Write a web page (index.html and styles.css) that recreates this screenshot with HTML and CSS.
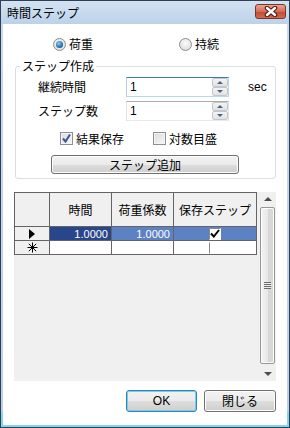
FILE: index.html
```html
<!DOCTYPE html>
<html>
<head>
    <meta charset="UTF-8">
    <title>時間ステップ</title>
    <link rel="stylesheet" href="styles.css">
</head>
<body>
    <div class="window">
        <div class="titlebar">
            <span class="title">時間ステップ</span>
            <span class="close-btn">
                <svg width="14" height="11" viewBox="0 0 14 11">
                    <path d="M3 2 L11 9 M11 2 L3 9" stroke="#4a1a12" stroke-width="4.5" stroke-linecap="round"/>
                    <path d="M3 2 L11 9 M11 2 L3 9" stroke="#fff" stroke-width="2.4" stroke-linecap="round"/>
                </svg>
            </span>
        </div>

        <div class="client">
            <div class="radio-row">
                <label class="radio"><span class="radio-dot checked"></span>荷重</label>
                <label class="radio"><span class="radio-dot"></span>持続</label>
            </div>

            <fieldset class="group">
                <legend>ステップ作成</legend>
                <div class="group-body">
                    <div class="field-row">
                        <span class="field-label">継続時間</span>
                        <div class="spin focused">
                            <span class="spin-value">1</span>
                            <div class="spin-btns">
                                <span class="spin-btn"><span class="arrow-up"></span></span>
                                <span class="spin-btn"><span class="arrow-down"></span></span>
                            </div>
                        </div>
                        <span class="unit">sec</span>
                    </div>
                    <div class="field-row">
                        <span class="field-label">ステップ数</span>
                        <div class="spin">
                            <span class="spin-value">1</span>
                            <div class="spin-btns">
                                <span class="spin-btn"><span class="arrow-up"></span></span>
                                <span class="spin-btn"><span class="arrow-down"></span></span>
                            </div>
                        </div>
                    </div>
                    <div class="check-row">
                        <label class="check">
                            <span class="check-box">
                                <svg width="11" height="11" viewBox="0 0 11 11">
                                    <path d="M2 5.5 L4.5 8.5 L9 1.5" fill="none" stroke="#3c5596" stroke-width="2"/>
                                </svg>
                            </span>結果保存
                        </label>
                        <label class="check"><span class="check-box"></span>対数目盛</label>
                    </div>
                    <button class="btn btn-add">ステップ追加</button>
                </div>
            </fieldset>

            <div class="grid">
                <table class="data-table">
                    <tr class="head">
                        <th class="row-head"></th>
                        <th class="col-time">時間</th>
                        <th class="col-load">荷重係数</th>
                        <th class="col-save">保存ステップ</th>
                    </tr>
                    <tr class="selected">
                        <th class="row-head">
                            <svg width="6" height="10" viewBox="0 0 6 10"><path d="M0 0 L6 5 L0 10 Z" fill="#000"/></svg>
                        </th>
                        <td class="num current">1.0000</td>
                        <td class="num">1.0000</td>
                        <td class="cb-cell">
                            <span class="cell-check">
                                <svg width="10" height="9" viewBox="0 0 10 9">
                                    <path d="M1 4.5 L3.8 7.5 L9 1" fill="none" stroke="#000" stroke-width="2"/>
                                </svg>
                            </span>
                        </td>
                    </tr>
                    <tr class="new-row">
                        <th class="row-head">
                            <svg width="11" height="11" viewBox="0 0 11 11">
                                <path d="M5.5 0.5 V10.5 M0.5 5.5 H10.5 M1.8 1.8 L9.2 9.2 M9.2 1.8 L1.8 9.2" stroke="#000" stroke-width="1"/>
                            </svg>
                        </th>
                        <td></td>
                        <td></td>
                        <td class="cb-cell"><span class="cell-check empty"></span></td>
                    </tr>
                </table>

                <div class="scrollbar">
                    <span class="sb-arrow"><span class="sb-up"></span></span>
                    <div class="sb-thumb">
                        <span class="grip"></span>
                    </div>
                    <span class="sb-arrow"><span class="sb-down"></span></span>
                </div>
            </div>

            <div class="footer">
                <button class="btn btn-ok">OK</button>
                <button class="btn btn-close">閉じる</button>
            </div>
        </div>
    </div>
</body>
</html>
```

FILE: styles.css
```css
body {
    margin: 0;
    font-family: "Noto Sans CJK JP", "Noto Sans", sans-serif;
    font-size: 12px;
    color: #000;
}
.window {
    width: 290px;
    height: 428px;
    box-sizing: border-box;
    border: 1px solid #2f3f55;
    background: linear-gradient(#c9dbef, #b9d1ea 96%, #7fd6ee 97%);
    display: flex;
    flex-direction: column;
}
.titlebar {
    height: 23px;
    flex-shrink: 0;
    display: flex;
    align-items: center;
    justify-content: space-between;
    padding: 0 3px 0 6px;
    background: linear-gradient(#d3e2f2, #bcd2ea);
}
.title {
    line-height: 14px;
    margin-top: 1px;
}
.close-btn {
    width: 31px;
    height: 15px;
    margin-top: -3px;
    box-sizing: border-box;
    border: 1px solid #7d3326;
    border-radius: 3px;
    background: linear-gradient(#e9a696, #d66b55 50%, #c24a31 51%, #cf6a4f);
    display: flex;
    align-items: center;
    justify-content: center;
}
.client {
    flex: 1;
    margin: 0 2px 2px;
    background: #fff;
    display: flex;
    flex-direction: column;
}

/* radio buttons */
.radio-row {
    display: grid;
    grid-template-columns: 126px 1fr;
    height: 14px;
    margin-top: 13px;
    padding-left: 50px;
}
.radio {
    display: flex;
    align-items: center;
    gap: 3px;
    line-height: 14px;
}
.radio-dot {
    width: 13px;
    height: 13px;
    box-sizing: border-box;
    border: 1px solid #8e8f8f;
    border-radius: 50%;
    background: radial-gradient(circle at 50% 40%, #fbfbfb, #d6d6d6);
    display: flex;
    align-items: center;
    justify-content: center;
}
.radio-dot.checked::after {
    content: "";
    width: 7px;
    height: 7px;
    border-radius: 50%;
    background: radial-gradient(circle at 40% 35%, #8fd0f5, #1f6fb0 60%, #0e4d86);
}

/* group box */
.group {
    margin: 8px 11px 0 12px;
    padding: 0;
    border: 1px solid #d5dfe5;
    border-radius: 3px;
}
.group legend {
    margin-left: 4px;
    padding: 0 2px;
    line-height: 14px;
}
.group-body {
    padding: 4px 0 4px 22px;
}
.field-row {
    display: flex;
    align-items: center;
    height: 20px;
    margin-bottom: 4px;
}
.field-label {
    width: 88px;
    line-height: 14px;
}
.spin {
    width: 103px;
    height: 20px;
    box-sizing: border-box;
    border: 1px solid;
    border-color: #abadb3 #e2e3ea #e3e9ef #e2e3ea;
    display: flex;
    align-items: center;
    justify-content: space-between;
}
.spin.focused {
    border-color: #3d7bad #b7d9ed #b7d9ed #b5cfe7;
}
.spin-value {
    padding-left: 3px;
    font-family: "Liberation Sans", sans-serif;
    font-size: 12px;
}
.spin-btns {
    width: 16px;
    height: 18px;
    display: flex;
    flex-direction: column;
}
.spin-btn {
    flex: 1;
    box-sizing: border-box;
    border: 1px solid #c3c7cd;
    border-radius: 2px;
    background: linear-gradient(#f4f4f4, #e2e2e2);
    display: flex;
    align-items: center;
    justify-content: center;
}
.arrow-up, .arrow-down {
    width: 0;
    height: 0;
    border-left: 3px solid transparent;
    border-right: 3px solid transparent;
}
.arrow-up {
    border-bottom: 3px solid #4d6185;
}
.arrow-down {
    border-top: 3px solid #4d6185;
}
.unit {
    margin-left: 19px;
    font-family: "Liberation Sans", sans-serif;
}
.check-row {
    display: grid;
    grid-template-columns: 93px 1fr;
    height: 13px;
    margin-top: 11px;
    padding-left: 22px;
}
.check {
    display: flex;
    align-items: center;
    gap: 3px;
    line-height: 13px;
    height: 13px;
}
.check-box {
    width: 13px;
    height: 13px;
    box-sizing: border-box;
    border: 1px solid #8e8f8f;
    background: linear-gradient(135deg, #dcdcdc, #f6f6f6);
    box-shadow: inset 0 0 0 1px #f4f4f4;
    display: flex;
    align-items: center;
    justify-content: center;
}

/* buttons */
.btn {
    box-sizing: border-box;
    border: 1px solid #707070;
    border-radius: 3px;
    background: linear-gradient(#f2f2f2, #ebebeb 50%, #dddddd 51%, #cfcfcf);
    box-shadow: inset 0 0 0 1px #fcfcfc;
    font-family: "Noto Sans CJK JP", sans-serif;
    font-size: 12px;
    line-height: 14px;
    padding: 0;
    color: #000;
}
.btn-add {
    display: block;
    width: 188px;
    height: 19px;
    margin: 10px 0 0 13px;
}

/* grid */
.grid {
    margin: 13px 11px 0 11px;
    height: 189px;
    flex-shrink: 0;
    background: #f0f0f0;
    display: flex;
    justify-content: space-between;
}
.data-table {
    border-collapse: collapse;
    align-self: flex-start;
}
.data-table th, .data-table td {
    border: 1px solid #646464;
    padding: 0;
    line-height: 12px;
    font-weight: normal;
}
.data-table th {
    background: #f0f0f0;
}
.head th {
    height: 33px;
}
.row-head {
    width: 34px;
    height: 13px;
}
.row-head svg {
    display: block;
    margin: 0 auto;
}
.col-time, .col-load {
    width: 61px;
}
.col-save {
    width: 82px;
}
.data-table td {
    height: 13px;
    background: #fff;
}
.selected td {
    background: #5d82c3;
    color: #fff;
}
.selected td.current {
    background: #27468b;
}
.num {
    text-align: right;
    padding-right: 3px !important;
    font-family: "Liberation Sans", sans-serif;
    font-size: 11px;
}
.cb-cell {
    text-align: left;
}
.cell-check {
    display: flex;
    align-items: center;
    justify-content: center;
    width: 12px;
    height: 12px;
    margin-left: 35px;
    box-sizing: border-box;
    border: 1px solid #8a8a8a;
    border-right-color: #fff;
    border-bottom-color: #fff;
    background: #fff;
}
.cell-check.empty {
    border-top-color: #fff;
}

/* scrollbar */
.scrollbar {
    width: 17px;
    background: #f0f0f0;
    display: flex;
    flex-direction: column;
    align-items: center;
}
.sb-arrow {
    height: 14px;
    display: flex;
    align-items: center;
    justify-content: center;
}
.sb-up, .sb-down {
    width: 0;
    height: 0;
    border-left: 4px solid transparent;
    border-right: 4px solid transparent;
}
.sb-up {
    border-bottom: 4px solid #4d4d4d;
}
.sb-down {
    border-top: 4px solid #4d4d4d;
}
.sb-thumb {
    flex: 1;
    width: 15px;
    margin: 1px 0 3px;
    box-sizing: border-box;
    border: 1px solid #979797;
    border-radius: 2px;
    background: linear-gradient(90deg, #f3f3f3, #e8e8e8 50%, #d6d6d6 51%, #dadada);
    box-shadow: inset 0 0 0 1px #fbfbfb;
    display: flex;
    align-items: center;
    justify-content: center;
}
.grip {
    width: 7px;
    height: 7px;
    background: repeating-linear-gradient(#6c6c6c 0 1px, #ececec 1px 2px);
}

/* footer */
.footer {
    display: flex;
    justify-content: flex-end;
    gap: 7px;
    margin-top: 9px;
    padding-right: 11px;
}
.btn-ok, .btn-close {
    height: 22px;
}
.btn-ok {
    width: 71px;
    border-color: #3c7fb1;
    box-shadow: inset 0 0 0 1px #6fd0f5;
    font-family: "Liberation Sans", sans-serif;
}
.btn-close {
    width: 72px;
}
```
